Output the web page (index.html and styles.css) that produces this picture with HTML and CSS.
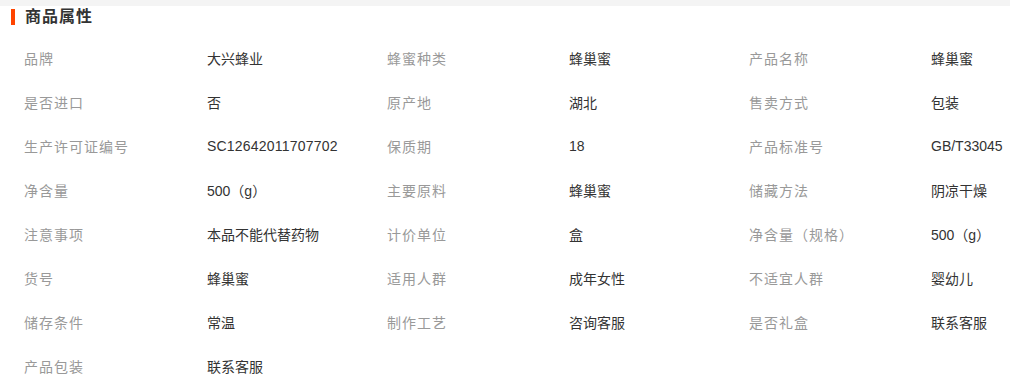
FILE: index.html
```html
<!DOCTYPE html>
<html lang="zh-CN">
<head>
<meta charset="utf-8">
<link rel="stylesheet" href="styles.css">
</head>
<body>
<div class="topbar"></div>
<div class="head"><span class="mark"></span><h2 class="title">商品属性</h2></div>
<div class="attrs">
  <span class="k">品牌</span><span class="v">大兴蜂业</span>
  <span class="k">蜂蜜种类</span><span class="v">蜂巢蜜</span>
  <span class="k">产品名称</span><span class="v">蜂巢蜜</span>

  <span class="k">是否进口</span><span class="v">否</span>
  <span class="k">原产地</span><span class="v">湖北</span>
  <span class="k">售卖方式</span><span class="v">包装</span>

  <span class="k">生产许可证编号</span><span class="v num">SC12642011707702</span>
  <span class="k">保质期</span><span class="v">18</span>
  <span class="k">产品标准号</span><span class="v">GB/T33045</span>

  <span class="k">净含量</span><span class="v">500（g）</span>
  <span class="k">主要原料</span><span class="v">蜂巢蜜</span>
  <span class="k">储藏方法</span><span class="v">阴凉干燥</span>

  <span class="k">注意事项</span><span class="v">本品不能代替药物</span>
  <span class="k">计价单位</span><span class="v">盒</span>
  <span class="k">净含量（规格）</span><span class="v">500（g）</span>

  <span class="k">货号</span><span class="v">蜂巢蜜</span>
  <span class="k">适用人群</span><span class="v">成年女性</span>
  <span class="k">不适宜人群</span><span class="v">婴幼儿</span>

  <span class="k">储存条件</span><span class="v">常温</span>
  <span class="k">制作工艺</span><span class="v">咨询客服</span>
  <span class="k">是否礼盒</span><span class="v">联系客服</span>

  <span class="k">产品包装</span><span class="v">联系客服</span>
</div>
</body>
</html>
```
FILE: styles.css
```css
html, body {
  margin: 0;
  padding: 0;
  background: #fff;
  font-family: "Liberation Sans", "Noto Sans CJK SC", sans-serif;
  font-size: 14px;
  overflow: hidden;
}
.topbar {
  height: 6px;
  background: #f4f4f4;
}
.head {
  height: 22px;
  display: flex;
  align-items: center;
  padding-left: 11px;
  gap: 10px;
}
.mark {
  width: 4px;
  height: 16px;
  background: #ff4400;
}
.title {
  margin: 0;
  font-size: 16px;
  font-weight: bold;
  color: #333;
  line-height: 22px;
  letter-spacing: 1px;
}
.attrs {
  margin-top: 8px;
  padding-left: 24px;
  display: grid;
  grid-template-columns: 183px 180px 182px 180px 182px 1fr;
  grid-auto-rows: 44px;
  align-items: center;
  white-space: nowrap;
}
.k {
  color: #999;
  letter-spacing: 1px;
}
.v {
  color: #333;
}
.num {
  letter-spacing: 0.2px;
}
```
